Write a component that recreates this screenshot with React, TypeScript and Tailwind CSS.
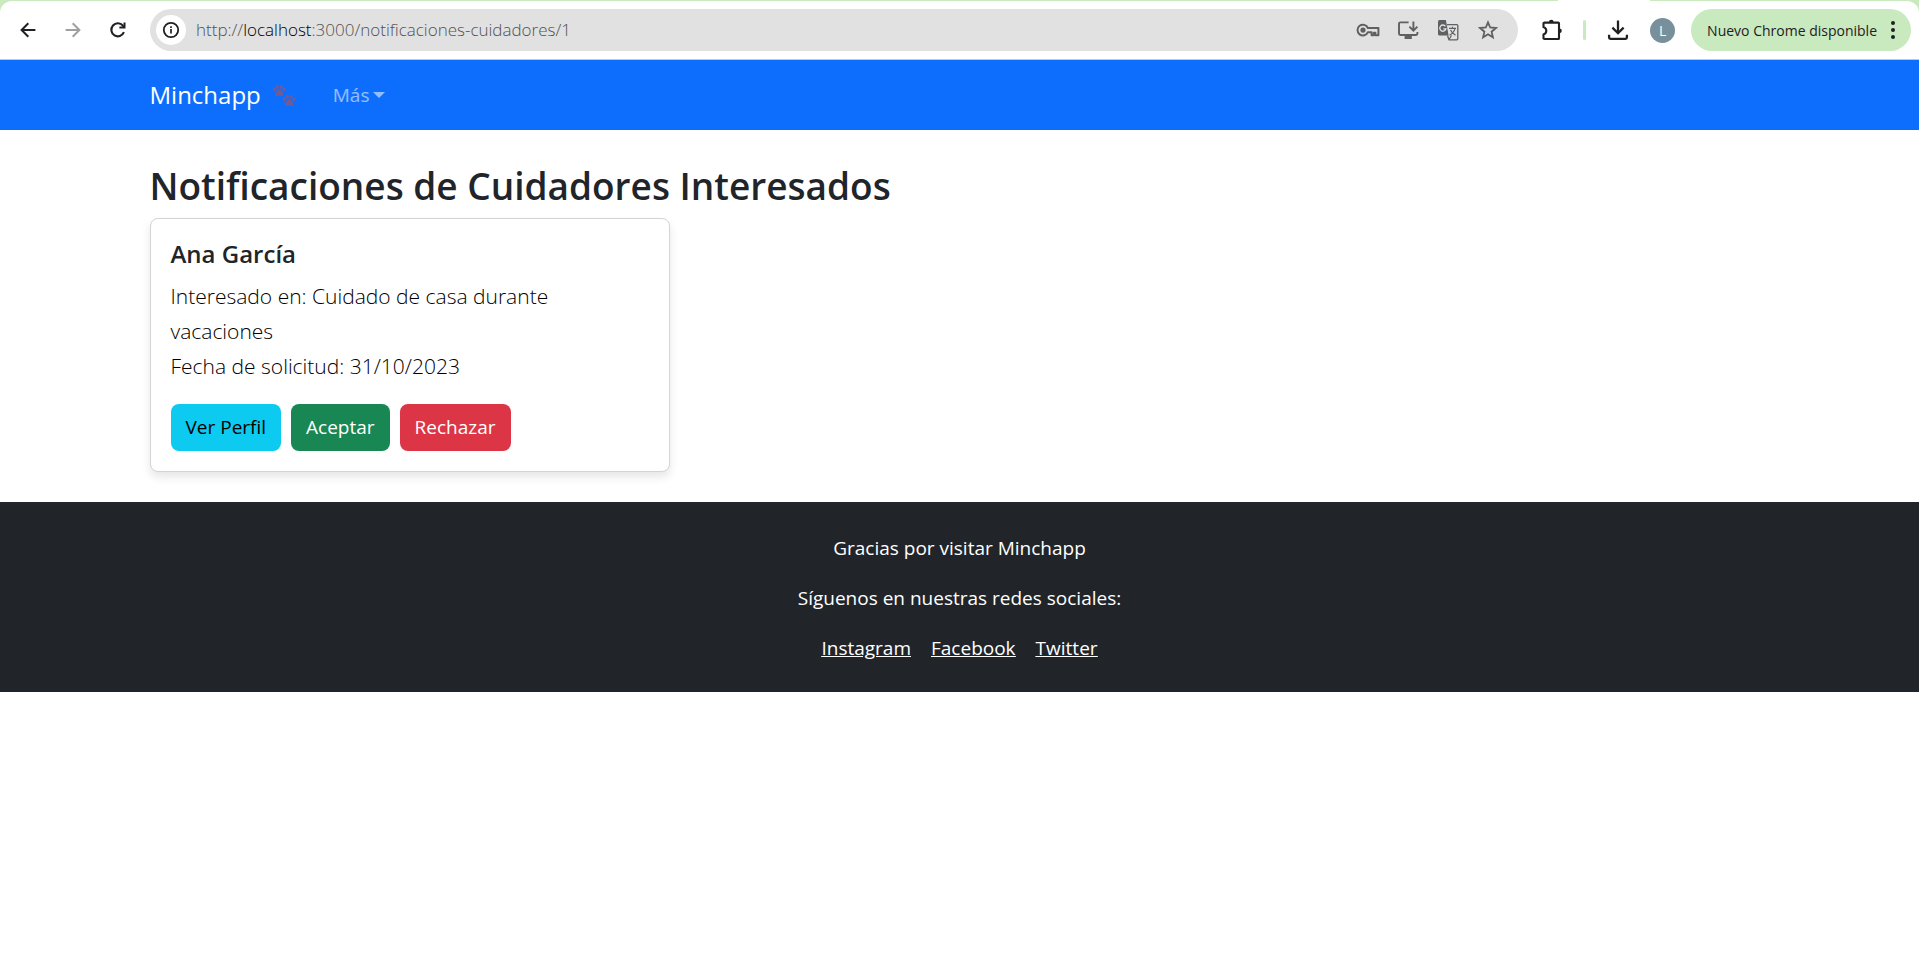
import type { ReactNode } from "react";

function BackIcon({ className = "" }: { className?: string }) {
  return (
    <svg viewBox="0 0 20 20" className={`h-5 w-5 ${className}`} fill="none" stroke="currentColor" strokeWidth="2" aria-hidden="true">
      <path d="M10.3 3.2 3.6 10l6.7 6.8M3.6 10H17.4" />
    </svg>
  );
}

function ReloadIcon() {
  return (
    <svg viewBox="0 0 20 20" className="h-5 w-5" fill="none" stroke="currentColor" strokeWidth="2.1" aria-hidden="true">
      <path d="M15.9 12.2A6.5 6.5 0 1 1 14.9 5.7L16.3 7.3" />
      <path d="M17.5 2.4V8.4H11.4V6.6H15.5V2.4Z" fill="currentColor" stroke="none" />
    </svg>
  );
}

function InfoIcon() {
  return (
    <svg viewBox="0 0 20 20" className="h-5 w-5" fill="none" stroke="currentColor" aria-hidden="true">
      <circle cx="10" cy="10" r="7.2" strokeWidth="1.8" />
      <path d="M10 9v4.6M10 6.2v1.8" strokeWidth="1.7" />
    </svg>
  );
}

function KeyIcon() {
  return (
    <svg viewBox="0 0 24 20" className="h-5 w-6" fill="none" stroke="currentColor" strokeWidth="2" aria-hidden="true">
      <path d="M11.9 8A5.4 5.4 0 1 0 11.9 12.2H15.6V15.2H17.8V12.8H19.4V15.2H22.4V8Z" strokeLinejoin="round" />
      <circle cx="7" cy="10.1" r="2.6" fill="currentColor" stroke="none" />
    </svg>
  );
}

function InstallIcon() {
  return (
    <svg viewBox="0 0 24 22" className="h-[22px] w-6" fill="none" stroke="currentColor" strokeWidth="1.9" aria-hidden="true">
      <path d="M12.6 3.4H4.4Q3 3.4 3 4.8V14.6Q3 16 4.4 16H20Q21.4 16 21.4 14.6V13" />
      <path d="M17.4 2.5V11M13.4 7.6 17.4 11.6 21.4 7.6" />
      <path d="M8.6 16.5H15.8V20H8.6Z" fill="currentColor" stroke="none" />
    </svg>
  );
}

function TranslateIcon() {
  return (
    <svg viewBox="0 0 22 22" className="h-[22px] w-[22px]" aria-hidden="true">
      <path d="M2.5 1H8.9L11.6 16.5H2.5Q1 16.5 1 15V2.5Q1 1 2.5 1Z" fill="currentColor" />
      <path d="M10 5.6H19.8Q20.8 5.6 20.8 6.6V19.8Q20.8 20.8 19.8 20.8H12L10.5 16.5" fill="none" stroke="currentColor" strokeWidth="1.3" />
      <path d="M8.4 7.3A3.1 3.1 0 1 0 8.9 9.9H6.3" fill="none" stroke="#e1e1e1" strokeWidth="1.4" />
      <path d="M12 9.3H19M15.5 7.8V9.3M18 9.3Q17 13.5 12.5 16.3M13.5 11Q15 14 18.5 16.3M12 20.5 14.5 16.5" fill="none" stroke="currentColor" strokeWidth="1.2" />
    </svg>
  );
}

function StarIcon() {
  return (
    <svg viewBox="0 0 20 20" className="h-5 w-5" fill="none" stroke="currentColor" strokeWidth="1.8" aria-hidden="true">
      <path d="M10 2.3 12.2 7.5 17.9 8 13.6 11.7 14.9 17.3 10 14.3 5.1 17.3 6.4 11.7 2.1 8 7.8 7.5Z" />
    </svg>
  );
}

function ExtensionIcon() {
  return (
    <svg viewBox="0 0 24 24" className="h-6 w-6" fill="none" stroke="currentColor" strokeWidth="2.1" aria-hidden="true">
      <path d="M4.5 4.6H18.3Q19 4.6 19 5.3V20.2Q19 21 18.3 21H4.5Q3.5 21 3.5 20.2V16.6Q6.3 15.5 6.3 12.8T3.5 9V5.4Q3.5 4.6 4.5 4.6Z" />
      <path d="M8.9 4.2a2.4 2.4 0 0 1 4.8 0ZM19.4 10.4a2.4 2.4 0 0 1 0 4.8Z" fill="currentColor" stroke="none" />
    </svg>
  );
}

function DownloadIcon() {
  return (
    <svg viewBox="0 0 24 24" className="h-6 w-6" fill="none" stroke="currentColor" strokeWidth="2.3" aria-hidden="true">
      <path d="M12 2.5V14.5M6.4 9.6 12 15.2 17.6 9.6" />
      <path d="M3.1 16.8V19.6Q3.1 20.9 4.4 20.9H19.6Q20.9 20.9 20.9 19.6V16.8" />
    </svg>
  );
}

function Paw({ x, y }: { x: number; y: number }) {
  return (
    <g transform={`translate(${x} ${y})`}>
      <ellipse cx="1.5" cy="4" rx="1.5" ry="1.9" transform="rotate(-25 1.5 4)" />
      <ellipse cx="4.4" cy="1.9" rx="1.5" ry="1.9" />
      <ellipse cx="8" cy="1.9" rx="1.5" ry="1.9" />
      <ellipse cx="11" cy="4" rx="1.5" ry="1.9" transform="rotate(25 11 4)" />
      <path d="M6.2 4.6C8.6 4.6 9 6.3 9.9 7.7 10.9 9.5 9.7 11.2 7.9 11 6.7 10.8 5.7 10.8 4.6 11 2.8 11.2 1.6 9.5 2.5 7.7 3.4 6.3 3.8 4.6 6.2 4.6Z" />
    </g>
  );
}

function PawsIcon() {
  return (
    <svg viewBox="0 0 24 24" className="h-6 w-6" fill="#6f5b97" role="img" aria-label="Huellas">
      <Paw x={0} y={2} />
      <Paw x={10} y={12} />
    </svg>
  );
}

function ToolButton({ label, children, className = "" }: { label: string; children: ReactNode; className?: string }) {
  return (
    <button type="button" aria-label={label} className={`flex shrink-0 items-center justify-center ${className}`}>
      {children}
    </button>
  );
}

function BrowserBar() {
  return (
    <div className="bg-[#c9e9bf]">
      <div className="flex h-px justify-end">
        <div className="mr-[269px] w-[92px] bg-white" />
      </div>
      <div className="flex h-[59px] items-center rounded-t-xl border-b border-[#c7c7c7] bg-white pr-2 pl-[18px] text-[#1f2023]">
        <div className="flex w-[132px] shrink-0 gap-[25px]">
          <ToolButton label="Atrás">
            <BackIcon />
          </ToolButton>
          <ToolButton label="Adelante" className="text-[#a0a0a0]">
            <BackIcon className="rotate-180" />
          </ToolButton>
          <ToolButton label="Recargar">
            <ReloadIcon />
          </ToolButton>
        </div>
        <div className="flex h-[42px] min-w-0 flex-1 items-center rounded-full bg-[#e1e1e1] pr-2.5 pl-1.5 text-[#505153]">
          <ToolButton label="Información del sitio" className="h-[30px] w-[30px] rounded-full bg-white text-[#1f2023]">
            <InfoIcon />
          </ToolButton>
          <div className="ml-2.5 flex-1 truncate text-[17px] font-light">
            http://<span className="text-black">localhost</span>:3000/notificaciones-cuidadores/1
          </div>
          <div className="flex items-center text-[#5f6062]">
            <ToolButton label="Contraseñas" className="w-10">
              <KeyIcon />
            </ToolButton>
            <ToolButton label="Instalar" className="w-10">
              <InstallIcon />
            </ToolButton>
            <ToolButton label="Traducir" className="w-10">
              <TranslateIcon />
            </ToolButton>
            <ToolButton label="Marcador" className="w-10">
              <StarIcon />
            </ToolButton>
          </div>
        </div>
        <ToolButton label="Extensiones" className="ml-[22px]">
          <ExtensionIcon />
        </ToolButton>
        <div className="ml-[19px] h-5 w-[3px] rounded-sm bg-[#c9e9bf]" />
        <ToolButton label="Descargas" className="ml-5">
          <DownloadIcon />
        </ToolButton>
        <ToolButton label="Perfil" className="ml-5 h-[25px] w-[25px] rounded-full bg-[#78909c] text-[14px] text-white">
          L
        </ToolButton>
        <button type="button" className="ml-4 flex h-[42px] shrink-0 items-center gap-[14px] rounded-full bg-[#c9e9bf] px-4 text-[14px]">
          Nuevo Chrome disponible
          <svg viewBox="0 0 4 18" className="h-[18px] w-1" fill="currentColor" aria-hidden="true">
            <circle cx="2" cy="2" r="2" />
            <circle cx="2" cy="9" r="2" />
            <circle cx="2" cy="16" r="2" />
          </svg>
        </button>
      </div>
    </div>
  );
}

export default function App() {
  return (
    <div className="min-h-screen bg-white font-['Open_Sans','Noto_Sans',sans-serif] text-[#212529]">
      <BrowserBar />
      <nav className="bg-[#0d6efd]">
        <div className="mx-auto flex h-[70px] max-w-[1650px] items-center px-[15px]">
          <a href="#" className="flex items-center gap-3 text-[24px] text-white">
            Minchapp
            <PawsIcon />
          </a>
          <button type="button" className="ml-9 flex items-center gap-1 text-[19px] text-white/55">
            Más
            <svg viewBox="0 0 12 6" className="h-1.5 w-3" fill="currentColor" aria-hidden="true">
              <path d="M0 0H12L6 6Z" />
            </svg>
          </button>
        </div>
      </nav>
      <main className="mx-auto max-w-[1650px] px-[15px] pt-8 pb-[30px]">
        <h1 className="mb-2 text-[37px] leading-[48px] font-semibold">Notificaciones de Cuidadores Interesados</h1>
        <section className="max-w-[520px] rounded-lg border border-[#d3d4d5] bg-white p-5 shadow-[0_5px_10px_rgba(0,0,0,0.1)]">
          <h2 className="mb-2.5 text-[24px] leading-[30px] font-semibold">Ana García</h2>
          <p className="mb-5 pr-16 text-[21px] leading-[35px] font-light text-black">
            Interesado en: Cuidado de casa durante vacaciones
            <br />
            Fecha de solicitud: 31/10/2023
          </p>
          <div className="flex gap-2.5 text-[19px] leading-[47px]">
            <button type="button" className="rounded-lg bg-[#0dcaf0] px-[15px] text-black">Ver Perfil</button>
            <button type="button" className="rounded-lg bg-[#198754] px-[15px] text-white">Aceptar</button>
            <button type="button" className="rounded-lg bg-[#dc3545] px-[15px] text-white">Rechazar</button>
          </div>
        </section>
      </main>
      <footer className="flex flex-col items-center gap-5 bg-[#212529] pt-[31px] pb-[29px] text-[19px] leading-[30px] text-white">
        <p>Gracias por visitar Minchapp</p>
        <p>Síguenos en nuestras redes sociales:</p>
        <div className="flex gap-5 underline">
          <a href="#instagram">Instagram</a>
          <a href="#facebook">Facebook</a>
          <a href="#twitter">Twitter</a>
        </div>
      </footer>
    </div>
  );
}
